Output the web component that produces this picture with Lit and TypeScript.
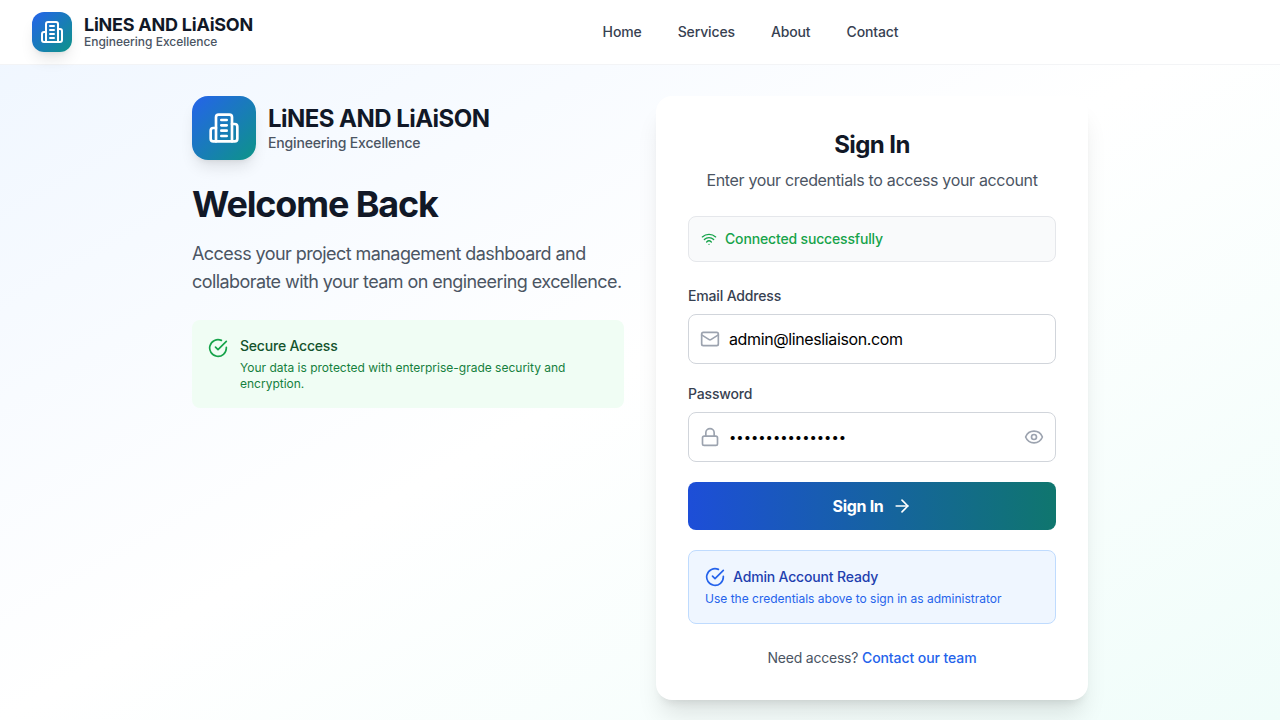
import { LitElement, html, css, svg } from "lit";
import { customElement, property } from "lit/decorators.js";

const ICONS: Record<string, unknown> = {
  building: svg`<path d="M6 22V4a2 2 0 0 1 2-2h8a2 2 0 0 1 2 2v18Z"/><path d="M6 12H4a2 2 0 0 0-2 2v6a2 2 0 0 0 2 2h2"/><path d="M18 9h2a2 2 0 0 1 2 2v9a2 2 0 0 1-2 2h-2"/><path d="M10 6h4"/><path d="M10 10h4"/><path d="M10 14h4"/><path d="M10 18h4"/>`,
  check: svg`<path d="M22 11.08V12a10 10 0 1 1-5.93-9.14"/><path d="m9 11 3 3L22 4"/>`,
  wifi: svg`<path d="M12 20h.01"/><path d="M2 8.82a15 15 0 0 1 20 0"/><path d="M5 12.859a10 10 0 0 1 14 0"/><path d="M8.5 16.429a5 5 0 0 1 7 0"/>`,
  mail: svg`<rect width="20" height="16" x="2" y="4" rx="2"/><path d="m22 7-8.97 5.7a1.94 1.94 0 0 1-2.06 0L2 7"/>`,
  lock: svg`<rect width="18" height="11" x="3" y="11" rx="2" ry="2"/><path d="M7 11V7a5 5 0 0 1 10 0v4"/>`,
  eye: svg`<path d="M2.062 12.348a1 1 0 0 1 0-.696 10.75 10.75 0 0 1 19.876 0 1 1 0 0 1 0 .696 10.75 10.75 0 0 1-19.876 0"/><circle cx="12" cy="12" r="3"/>`,
  arrow: svg`<path d="M5 12h14"/><path d="m12 5 7 7-7 7"/>`,
};

@customElement("ui-icon")
class UiIcon extends LitElement {
  @property() name = "check";
  static styles = css`
    :host { display: block; width: 20px; height: 20px; flex: none; }
    svg { display: block; width: 100%; height: 100%; }
  `;
  render() {
    return html`<svg viewBox="0 0 24 24" fill="none" stroke="currentColor" stroke-width="2" stroke-linecap="round" stroke-linejoin="round">${ICONS[this.name]}</svg>`;
  }
}

@customElement("brand-mark")
class BrandMark extends LitElement {
  @property({ type: Boolean, reflect: true }) large = false;
  static styles = css`
    :host { display: flex; align-items: center; gap: 12px; }
    .tile {
      width: 40px; height: 40px; border-radius: 12px; color: #fff;
      display: flex; align-items: center; justify-content: center;
      background: linear-gradient(to bottom right, #2563eb, #0d9488);
      box-shadow: 0 10px 15px -3px rgba(0,0,0,.1), 0 4px 6px -4px rgba(0,0,0,.1);
    }
    ui-icon { width: 24px; height: 24px; }
    .name { padding-top: 2px; font-size: 18px; line-height: 18px; font-weight: 700; letter-spacing: -0.235px; color: #111827; }
    .tag { font-size: 12px; line-height: 16px; font-weight: 500; letter-spacing: -0.02px; color: #4b5563; }
    :host([large]) .tile { width: 64px; height: 64px; border-radius: 16px; }
    :host([large]) ui-icon { width: 32px; height: 32px; }
    :host([large]) .name { font-size: 24px; line-height: 28px; letter-spacing: -0.54px; }
    :host([large]) .tag { font-size: 14px; line-height: 20px; letter-spacing: -0.17px; }
  `;
  render() {
    return html`
      <div class="tile"><ui-icon name="building"></ui-icon></div>
      <div>
        <div class="name">LiNES AND LiAiSON</div>
        <div class="tag">Engineering Excellence</div>
      </div>`;
  }
}

@customElement("app-root")
class AppRoot extends LitElement {
  static styles = css`
    :host {
      display: flex; flex-direction: column; height: 720px; overflow: hidden;
      font-family: Inter, "Liberation Sans", sans-serif; color: #111827;
      background: linear-gradient(to bottom right, #eff6ff, #ffffff, #f0fdfa);
      -webkit-font-smoothing: antialiased;
    }
    * { box-sizing: border-box; }
    h1, h2, p { margin: 0; }
    header {
      height: 65px; flex: none; padding: 0 32px;
      display: flex; align-items: center; justify-content: space-between;
      background: rgba(255,255,255,.95); border-bottom: 1px solid #f3f4f6;
    }
    nav { display: flex; gap: 36px; }
    nav a { font-size: 14px; line-height: 20px; font-weight: 500; letter-spacing: -0.13px; color: #374151; }
    main {
      width: 896px; margin: 0 auto; padding-top: 31px;
      display: grid; grid-template-columns: 1fr 1fr; gap: 32px; align-items: start;
    }
    .intro h1 { margin-top: 24px; font-size: 36px; line-height: 40px; font-weight: 700; letter-spacing: -1.15px; }
    .lead { margin-top: 16px; font-size: 18px; line-height: 28px; letter-spacing: -0.57px; color: #4b5563; }
    .secure {
      margin-top: 24px; padding: 16px; border-radius: 8px; background: #f0fdf4;
      display: flex; align-items: flex-start; gap: 12px; color: #16a34a;
    }
    .secure ui-icon { margin-top: 2px; }
    .secure-title { font-size: 14px; line-height: 20px; font-weight: 500; letter-spacing: -0.2px; color: #14532d; }
    .secure-text { margin-top: 4px; font-size: 12px; line-height: 16px; color: #15803d; }
    .card {
      padding: 32px; border-radius: 16px; background: #fff;
      box-shadow: 0 20px 25px -5px rgba(0,0,0,.1), 0 8px 10px -6px rgba(0,0,0,.1);
    }
    .card h2 { padding-top: 2px; font-size: 24px; line-height: 30px; font-weight: 700; text-align: center; letter-spacing: -0.6px; }
    .sub { margin-top: 8px; font-size: 16px; line-height: 24px; letter-spacing: -0.34px; color: #4b5563; text-align: center; }
    .status {
      margin-top: 24px; padding: 12px; border: 1px solid #e5e7eb; border-radius: 8px; background: #f9fafb;
      display: flex; align-items: center; gap: 8px; color: #16a34a;
      font-size: 14px; line-height: 20px; font-weight: 500; letter-spacing: -0.16px;
    }
    .status ui-icon { width: 16px; height: 16px; }
    form { margin-top: 24px; display: flex; flex-direction: column; gap: 20px; }
    label { display: block; margin-bottom: 8px; font-size: 14px; line-height: 20px; font-weight: 500; letter-spacing: -0.16px; color: #374151; }
    .field {
      height: 50px; padding: 0 11px; border: 1px solid #d1d5db; border-radius: 8px;
      display: flex; align-items: center; gap: 9px; color: #9ca3af; background: #fff;
    }
    input {
      flex: 1; min-width: 0; height: 24px; padding: 0; border: 0; outline: 0; background: transparent;
      font: 400 16px/24px Inter, sans-serif; letter-spacing: -0.38px; color: #000;
    }
    input[type="password"] { font-size: 13px; letter-spacing: 0; }
    button {
      height: 48px; padding: 0; border: 0; border-radius: 8px; color: #fff;
      font: 700 16px/24px Inter, sans-serif; letter-spacing: -0.3px;
      display: flex; align-items: center; justify-content: center; gap: 8px;
      background: linear-gradient(to right, #1d4ed8, #0f766e);
    }
    .admin { padding: 16px; border: 1px solid #bfdbfe; border-radius: 8px; background: #eff6ff; }
    .admin-head { display: flex; align-items: center; gap: 8px; color: #2563eb; }
    .admin-title { font-size: 14px; line-height: 20px; font-weight: 500; letter-spacing: -0.17px; color: #1e40af; }
    .admin-text { margin-top: 4px; font-size: 12px; line-height: 16px; color: #2563eb; }
    .help { margin-top: 24px; font-size: 14px; line-height: 20px; letter-spacing: -0.21px; color: #4b5563; text-align: center; }
    .help a { font-weight: 500; letter-spacing: -0.08px; color: #2563eb; }
  `;

  render() {
    return html`
      <header>
        <brand-mark></brand-mark>
        <nav>${["Home", "Services", "About", "Contact"].map((t) => html`<a>${t}</a>`)}</nav>
        <div></div>
      </header>
      <main>
        <section class="intro">
          <brand-mark large></brand-mark>
          <h1>Welcome Back</h1>
          <p class="lead">Access your project management dashboard and collaborate with your team on engineering excellence.</p>
          <div class="secure">
            <ui-icon name="check"></ui-icon>
            <div>
              <div class="secure-title">Secure Access</div>
              <div class="secure-text">Your data is protected with enterprise-grade security and encryption.</div>
            </div>
          </div>
        </section>
        <section class="card">
          <h2>Sign In</h2>
          <p class="sub">Enter your credentials to access your account</p>
          <div class="status"><ui-icon name="wifi"></ui-icon><span>Connected successfully</span></div>
          <form>
            <div>
              <label>Email Address</label>
              <div class="field"><ui-icon name="mail"></ui-icon><input type="email" value="admin@linesliaison.com" /></div>
            </div>
            <div>
              <label>Password</label>
              <div class="field"><ui-icon name="lock"></ui-icon><input type="password" value="0123456789abcdef" /><ui-icon name="eye"></ui-icon></div>
            </div>
            <button type="button"><span>Sign In</span><ui-icon name="arrow"></ui-icon></button>
            <div class="admin">
              <div class="admin-head"><ui-icon name="check"></ui-icon><span class="admin-title">Admin Account Ready</span></div>
              <div class="admin-text">Use the credentials above to sign in as administrator</div>
            </div>
          </form>
          <p class="help">Need access? <a>Contact our team</a></p>
        </section>
      </main>`;
  }
}
